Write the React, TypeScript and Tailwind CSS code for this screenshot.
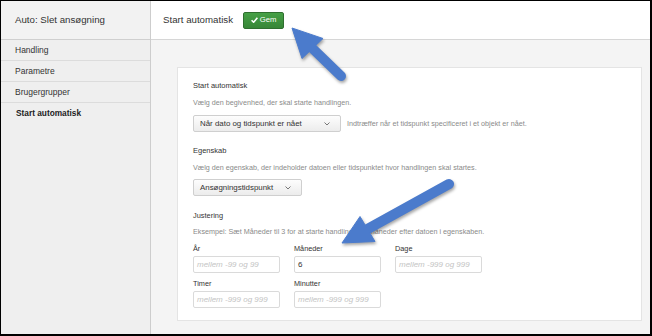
import React from 'react';

const font = "font-['Liberation_Sans',Arial,sans-serif]";

function Chevron() {
  return (
    <svg width="6" height="4" viewBox="0 0 6 4" className="shrink-0">
      <polyline points="0.5,0.5 3,3 5.5,0.5" fill="none" stroke="#777" strokeWidth="1" />
    </svg>
  );
}

function Select({ value, width }: { value: string; width: string }) {
  return (
    <div
      className={`${width} h-[17px] flex items-center justify-between pl-[6px] pr-[10px] border border-[#cfcfcf] rounded-[2px] bg-gradient-to-b from-[#fdfdfd] to-[#ececec] text-[7.9px] leading-[10px] text-[#333]`}
    >
      <span>{value}</span>
      <Chevron />
    </div>
  );
}

function Field({ label, value, placeholder }: { label: string; value?: string; placeholder: string }) {
  return (
    <div className="flex flex-col">
      <div className="text-[7.3px] leading-[10px] text-[#333]">{label}</div>
      <div className="mt-[2px] h-[17px] flex items-center px-[3px] border border-[#dadada] rounded-[2px] bg-white">
        {value ? (
          <span className="text-[8px] text-[#333]">{value}</span>
        ) : (
          <span className="text-[8px] italic text-[#c4c4c4]">{placeholder}</span>
        )}
      </div>
    </div>
  );
}

export default function App() {
  const nav = ['Handling', 'Parametre', 'Brugergrupper'];

  return (
    <div className={`relative w-[652px] h-[336px] overflow-hidden ${font}`}>
      <div className="w-full h-full flex border-t border-l border-r-2 border-b-2 border-black bg-[#f4f4f4]">
        {/* sidebar */}
        <div className="w-[150px] shrink-0 flex flex-col bg-[#efefef] border-r border-[#cdcdcd]">
          <div className="h-[39px] shrink-0 flex items-center pl-[14px] bg-[#f2f2f2] border-b border-[#cfcfcf] text-[9.7px] text-[#333]">
            Auto: Slet ansøgning
          </div>
          {nav.map((n) => (
            <div
              key={n}
              className="h-[21px] shrink-0 flex items-center pl-[14px] border-b border-[#dcdcdc] text-[8.5px] text-[#333]"
            >
              {n}
            </div>
          ))}
          <div className="h-[21px] shrink-0 flex items-center pl-[15px] text-[8.3px] font-bold text-[#222]">
            Start automatisk
          </div>
        </div>

        {/* main */}
        <div className="flex-1 flex flex-col">
          <div className="h-[39px] shrink-0 flex items-center pl-[12px] bg-white border-b border-[#d6d6d6]">
            <span className="text-[9.7px] text-[#333]">Start automatisk</span>
            <button className="ml-[10px] h-[17px] w-[41px] flex items-center justify-center gap-[2px] rounded-[2px] border border-[#2f6f2f] bg-gradient-to-b from-[#46a046] to-[#378637] text-white text-[7.7px]">
              <svg width="7" height="6" viewBox="0 0 7 6">
                <path d="M0.6 3.2 L2.6 5.2 L6.4 0.8" fill="none" stroke="#fff" strokeWidth="1.6" />
              </svg>
              <span>Gem</span>
            </button>
          </div>

          <div className="flex-1 pt-[27px] pl-[26px] pr-[8px]">
            <div className="bg-white border border-[#e4e4e4] pl-[15px] pt-[13px] pb-[12px]">
              <div className="text-[7.5px] leading-[10px] text-[#333]">Start automatisk</div>
              <div className="mt-[7px] text-[7.2px] leading-[10px] text-[#8a8a8a]">
                Vælg den begivenhed, der skal starte handlingen.
              </div>
              <div className="mt-[7px] flex items-center">
                <Select value="Når dato og tidspunkt er nået" width="w-[148px]" />
                <span className="ml-[6px] text-[7.2px] leading-[10px] text-[#8a8a8a]">
                  Indtræffer når et tidspunkt specificeret i et objekt er nået.
                </span>
              </div>

              <div className="mt-[14px] text-[7.5px] leading-[10px] text-[#333]">Egenskab</div>
              <div className="mt-[7px] text-[7.2px] leading-[10px] text-[#8a8a8a]">
                Vælg den egenskab, der indeholder datoen eller tidspunktet hvor handlingen skal startes.
              </div>
              <div className="mt-[6px] flex">
                <Select value="Ansøgningstidspunkt" width="w-[109px]" />
              </div>

              <div className="mt-[15px] text-[7.4px] leading-[10px] text-[#333]">Justering</div>
              <div className="mt-[6px] text-[7.2px] leading-[10px] text-[#8a8a8a]">
                Eksempel: Sæt Måneder til 3 for at starte handlingen 3 måneder efter datoen i egenskaben.
              </div>
              <div className="mt-[7px] grid grid-cols-[87px_87px_87px] gap-x-[14px] gap-y-[6px]">
                <Field label="År" placeholder="mellem -99 og 99" />
                <Field label="Måneder" value="6" placeholder="mellem -99 og 99" />
                <Field label="Dage" placeholder="mellem -999 og 999" />
                <Field label="Timer" placeholder="mellem -999 og 999" />
                <Field label="Minutter" placeholder="mellem -999 og 999" />
              </div>
            </div>
          </div>
        </div>
      </div>

      {/* annotation arrows */}
      <svg
        width="652"
        height="336"
        viewBox="0 0 652 336"
        className="absolute left-0 top-0 pointer-events-none drop-shadow-[1px_2px_1.5px_rgba(0,0,0,0.35)]"
      >
        <line x1="311" y1="47" x2="341" y2="76" stroke="#4b7bcc" strokeWidth="10" strokeLinecap="round" />
        <polygon points="292,28 323,38.5 302,58.5" fill="#4b7bcc" stroke="#4b7bcc" strokeWidth="1" strokeLinejoin="round" />
        <line x1="364" y1="231" x2="449" y2="184" stroke="#4b7bcc" strokeWidth="10" strokeLinecap="round" />
        <polygon points="342,243 360,216.5 375,241.5" fill="#4b7bcc" stroke="#4b7bcc" strokeWidth="1" strokeLinejoin="round" />
      </svg>
    </div>
  );
}
